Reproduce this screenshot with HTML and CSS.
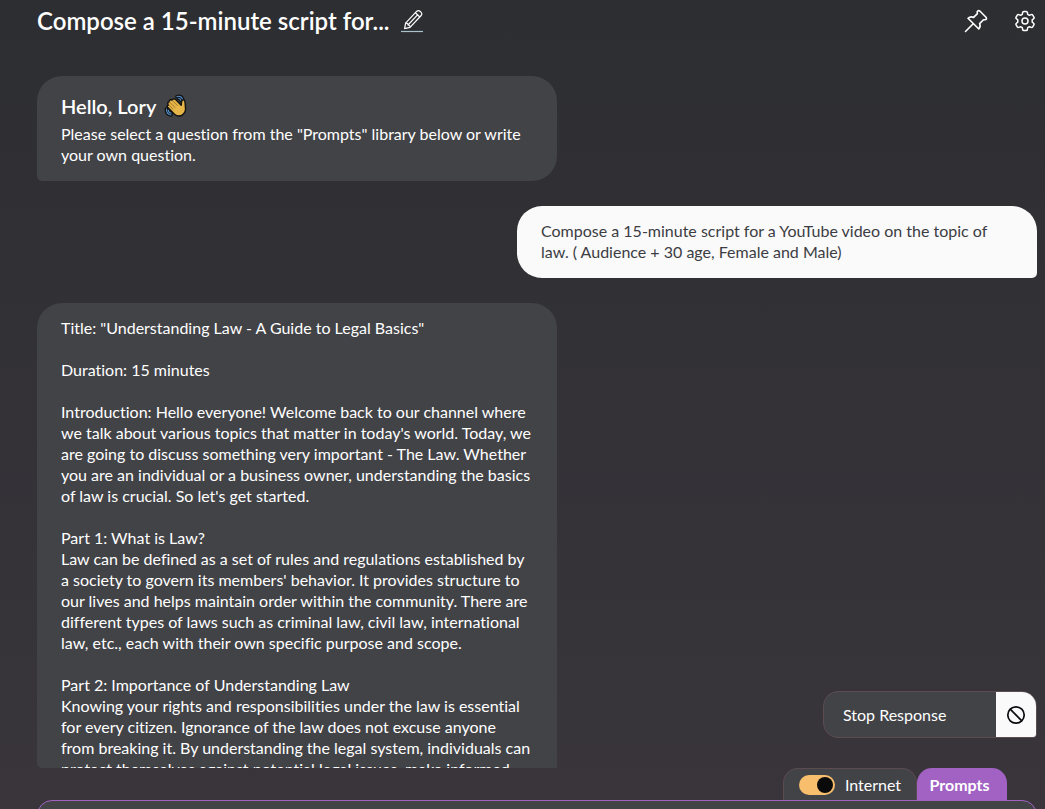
FILE: index.html
```html
<!DOCTYPE html>
<html lang="en">
<head>
    <meta charset="utf-8" />
    <title>Chat</title>
    <meta name="viewport" content="width=device-width, initial-scale=1.0">
    <link rel="stylesheet" href="styles.css">
</head>
<body>
    <header class="topbar">
        <h1 class="title">Compose a 15-minute script for...</h1>
        <button type="button" class="icon-btn" aria-label="Rename chat">
            <svg width="24" height="24" viewBox="0 0 24 24" fill="none" stroke="#fff" stroke-width="1.2" stroke-linejoin="round">
                <path d="M5.6 14.2 16.8 2.2Q18.3.9 20 2.3L21.2 3.4Q22.6 5 21.2 6.5L10 18.3 4.6 19.6Z" />
                <path d="M5.6 14.2Q8 13.8 8 16 10.2 16 10 18.3M15.4 3.8 19.8 8M8 16 17.6 5.9" />
                <path d="M1 22.5H23" stroke="#a9c3cc" />
            </svg>
        </button>
        <div class="actions">
            <button type="button" class="icon-btn" aria-label="Pin chat">
                <svg width="24" height="24" viewBox="0 0 24 24" fill="none" stroke="#fff" stroke-width="1.6" stroke-linejoin="round" stroke-linecap="round">
                    <path d="M13.2 2.8Q14 .9 15.8 2L22 8.2Q23.3 10 21.2 10.8L19.5 10.7 15.6 14.6Q17 17.5 14.8 20L4 9.3Q6.5 7 9.6 8.4L13.4 4.6Z" />
                    <path d="M9.2 14.8 1.5 22.5" />
                </svg>
            </button>
            <button type="button" class="icon-btn" aria-label="Settings">
                <svg width="24" height="24" viewBox="0 0 24 24" fill="none" stroke="#fff" stroke-width="1.5" stroke-linejoin="round">
                    <path d="M9.6 3.5Q9.8 2.5 10.8 2.5H13.2Q14.2 2.5 14.4 3.5L14.7 5.3 16.4 6.3 18.2 5.6Q19.2 5.3 19.7 6.1L20.9 8.2Q21.4 9.1 20.6 9.7L19.2 10.9V13.1L20.6 14.3Q21.4 14.9 20.9 15.8L19.7 17.9Q19.2 18.7 18.2 18.4L16.4 17.7 14.7 18.7 14.4 20.5Q14.2 21.5 13.2 21.5H10.8Q9.8 21.5 9.6 20.5L9.3 18.7 7.6 17.7 5.8 18.4Q4.8 18.7 4.3 17.9L3.1 15.8Q2.6 14.9 3.4 14.3L4.8 13.1V10.9L3.4 9.7Q2.6 9.1 3.1 8.2L4.3 6.1Q4.8 5.3 5.8 5.6L7.6 6.3 9.3 5.3Z" />
                    <circle cx="12" cy="12" r="3" />
                </svg>
            </button>
        </div>
    </header>

    <main class="chat">
        <div class="bubble greeting">
            <h2 class="hello">Hello, Lory
                <svg width="24" height="24" viewBox="0 0 24 24" stroke-linejoin="round" stroke-linecap="round" aria-hidden="true">
                    <path d="M13 2.7Q17.5 1.5 18.8 6M14.7 4.5Q16.5 4.5 17 6.5M2.5 15Q2 20 7 21M4.3 16Q4.3 18.7 7 19.2" fill="none" stroke="#111" stroke-width="3.6" />
                    <path d="M13 2.7Q17.5 1.5 18.8 6M14.7 4.5Q16.5 4.5 17 6.5M2.5 15Q2 20 7 21M4.3 16Q4.3 18.7 7 19.2" fill="none" stroke="#4f87bd" stroke-width="1.2" />
                    <path d="M10.5 20.3 3.6 13.2Q2.6 11.5 4.5 11L3.9 9.9Q3.3 8 5.2 7.9L5.4 6.8Q6.2 5 8 6.2L9 5.1Q10.4 4.3 11.6 5.6L17.2 11.2 17.6 7.5Q18.5 5 20.3 6.2 21 6.7 21.2 10.2L21.6 15.5Q21.4 18.5 18.6 20.8 14.5 23.5 10.5 20.3Z" fill="#e5b548" stroke="#111" stroke-width="1.4" />
                    <path d="M4.7 11 9 15.2M5.4 8 11 13.4M8.2 6.4 13.3 11.5" fill="none" stroke="#9b6b26" stroke-width=".9" />
                </svg>
            </h2>
            <p>Please select a question from the "Prompts" library below or write your own question.</p>
        </div>

        <div class="bubble user">
            <p>Compose a 15-minute script for a YouTube video on the topic of law. ( Audience + 30 age, Female and Male)</p>
        </div>

        <div class="bubble answer">
            <p>Title: "Understanding Law - A Guide to Legal Basics"</p>
            <p>Duration: 15 minutes</p>
            <p>Introduction: Hello everyone! Welcome back to our channel where we talk about various topics that matter in today's world. Today, we are going to discuss something very important - The Law. Whether you are an individual or a business owner, understanding the basics of law is crucial. So let's get started.</p>
            <p>Part 1: What is Law?<br />
            Law can be defined as a set of rules and regulations established by a society to govern its members' behavior. It provides structure to our lives and helps maintain order within the community. There are different types of laws such as criminal law, civil law, international law, etc., each with their own specific purpose and scope.</p>
            <p>Part 2: Importance of Understanding Law<br />
            Knowing your rights and responsibilities under the law is essential for every citizen. Ignorance of the law does not excuse anyone from breaking it. By understanding the legal system, individuals can protect themselves against potential legal issues, make informed</p>
        </div>
    </main>

    <footer class="composer">
        <button type="button" class="stop">
            <span class="stop-text">Stop Response</span>
            <span class="stop-icon">
                <svg width="20" height="20" viewBox="0 0 20 20" fill="none" stroke="#0c0c10" stroke-width="1.7">
                    <circle cx="10" cy="10" r="8.2" />
                    <path d="M4.2 4.2 15.8 15.8" />
                </svg>
            </span>
        </button>
        <div class="tabs">
            <label class="tab internet" for="internet">
                <input type="checkbox" id="internet" class="switch" checked />
                Internet
            </label>
            <button type="button" class="tab prompts">Prompts</button>
        </div>
        <textarea class="message" aria-label="Message"></textarea>
    </footer>
</body>
</html>
```
FILE: styles.css
```css
* {
    box-sizing: border-box;
}

body {
    margin: 0;
    height: 100vh;
    padding: 0 8px 0 37px;
    display: flex;
    flex-direction: column;
    overflow: hidden;
    color: #fff;
    background: linear-gradient(#2d2e32, #39353b);
    font-family: Lato, "Liberation Sans", sans-serif;
    font-size: 16px;
    line-height: 21px;
    font-variant-ligatures: none;
}

h1, h2, p {
    margin: 0;
}

button {
    font: inherit;
    color: inherit;
    padding: 0;
    border: 0;
    background: none;
    cursor: pointer;
}

svg {
    display: block;
}

.topbar {
    flex: none;
    display: flex;
    align-items: center;
    gap: 10px;
    height: 42px;
    margin-bottom: 34px;
}

.title {
    font-size: 24px;
    font-weight: 600;
    line-height: 32px;
}

.actions {
    display: flex;
    gap: 25px;
    margin-left: auto;
}

.chat {
    flex: 1;
    min-height: 0;
    display: flex;
    flex-direction: column;
    align-items: flex-start;
    gap: 25px;
    overflow: hidden;
    border-bottom-left-radius: 5px;
}

.bubble {
    flex: none;
    width: 52%;
    padding: 14px 24px 16px;
    background: #424347;
    border-radius: 25px 25px 25px 5px;
}

.hello {
    display: flex;
    align-items: center;
    gap: 8px;
    height: 32px;
    margin-bottom: 1px;
    font-size: 20px;
    font-weight: 600;
}

.user {
    align-self: flex-end;
    color: #3c3d43;
    background: #fafafa;
    border-radius: 25px 25px 5px 25px;
}

.answer p + p {
    margin-top: 21px;
}

.composer {
    flex: none;
    position: relative;
    height: 41px;
}

/* floats over the chat */
.stop {
    position: absolute;
    right: 0;
    bottom: 71px;
    display: flex;
    width: 214px;
    height: 47px;
    overflow: hidden;
    text-align: left;
    background: #424347;
    border: 1px solid #5c4c50;
    border-radius: 15px 15px 4px 15px;
}

.stop-text {
    flex: 1;
    align-self: center;
    padding-left: 19px;
}

.stop-icon {
    display: flex;
    align-items: center;
    justify-content: center;
    width: 40px;
    height: 100%;
    background: #fafafa;
}

.tabs {
    display: flex;
    justify-content: flex-end;
    height: 32px;
    padding-right: 30px;
}

.tab {
    display: flex;
    align-items: center;
    justify-content: center;
    border-radius: 15px 15px 0 0;
}

.internet {
    gap: 10px;
    width: 134px;
    background: #424347;
    border: 1px solid #5c4c50;
    border-bottom: 0;
}

.switch {
    appearance: none;
    width: 36px;
    height: 20px;
    margin: 0;
    padding: 2px;
    display: flex;
    background: #f6be6d;
    border-radius: 10px;
}

.switch::before {
    content: "";
    width: 16px;
    height: 16px;
    border-radius: 50%;
    background: #0a0a0a;
}

.switch:checked {
    justify-content: flex-end;
}

.prompts {
    width: 90px;
    padding-right: 5px;
    font-weight: 700;
    background: #a262c4;
}

.message {
    display: block;
    width: 100%;
    height: 80px;
    padding: 15px 24px;
    resize: none;
    color: #fff;
    font: inherit;
    background: #424347;
    border: 1px solid #a262c4;
    border-radius: 15px;
}
```
